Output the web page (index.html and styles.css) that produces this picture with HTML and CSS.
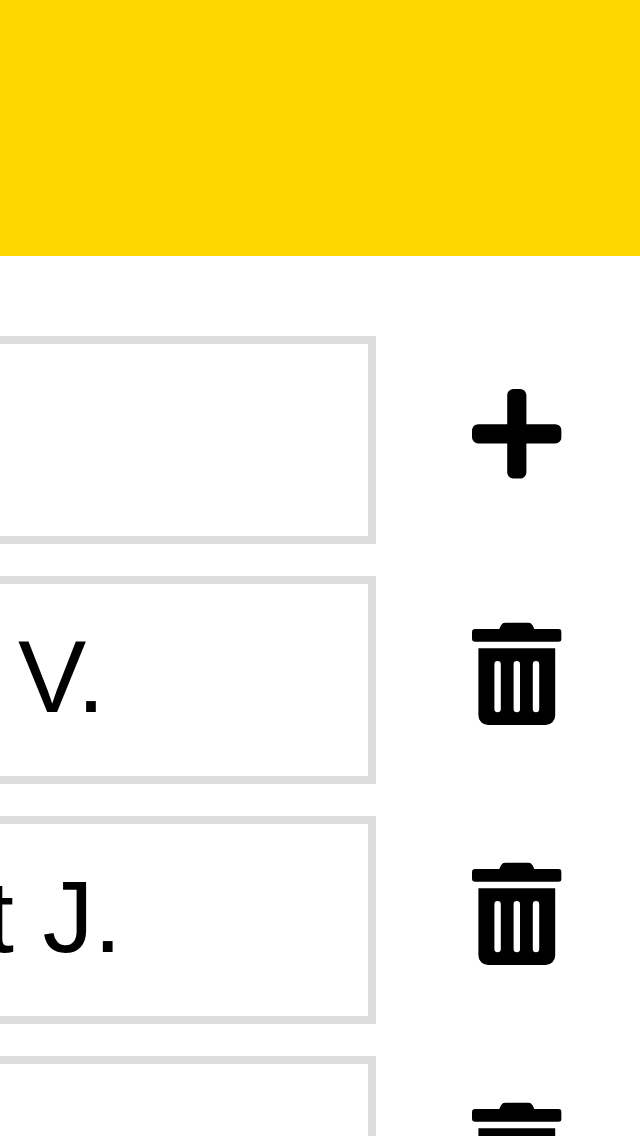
FILE: index.html
```html
<!DOCTYPE html>
<html lang="en">
<head>
<meta charset="utf-8">
<meta name="viewport" content="width=device-width">
<title>List</title>
<link rel="stylesheet" href="styles.css">
</head>
<body>
<svg class="symbols" aria-hidden="true">
<symbol id="plus" viewBox="0 0 448 512"><path d="M416 208H272V64c0-17.67-14.33-32-32-32h-32c-17.67 0-32 14.33-32 32v144H32c-17.67 0-32 14.33-32 32v32c0 17.67 14.33 32 32 32h144v144c0 17.67 14.33 32 32 32h32c17.67 0 32-14.33 32-32V304h144c17.67 0 32-14.33 32-32v-32c0-17.67-14.33-32-32-32z"/></symbol>
<symbol id="trash" viewBox="0 0 448 512"><path d="M32 464a48 48 0 0 0 48 48h288a48 48 0 0 0 48-48V128H32zm272-256a16 16 0 0 1 32 0v224a16 16 0 0 1-32 0zm-96 0a16 16 0 0 1 32 0v224a16 16 0 0 1-32 0zm-96 0a16 16 0 0 1 32 0v224a16 16 0 0 1-32 0zM432 32H312l-9.4-18.7A24 24 0 0 0 281.1 0H166.8a23.72 23.72 0 0 0-21.4 13.3L136 32H16A16 16 0 0 0 0 48v32a16 16 0 0 0 16 16h416a16 16 0 0 0 16-16V48a16 16 0 0 0-16-16z"/></symbol>
</svg>
<header class="banner"></header>
<main class="list">
<div class="row"><div class="field"></div><svg class="icon" viewBox="0 -3 450 515"><use href="#plus" width="448" height="512"/></svg></div>
<div class="row"><div class="field"><span class="name name-first">V.</span></div><svg class="icon" viewBox="0 -3 450 515"><use href="#trash" width="448" height="512"/></svg></div>
<div class="row"><div class="field"><span class="name name-second">t J.</span></div><svg class="icon" viewBox="0 -3 450 515"><use href="#trash" width="448" height="512"/></svg></div>
<div class="row row-last"><div class="field"></div><svg class="icon" viewBox="0 -3 450 515"><use href="#trash" width="448" height="512"/></svg></div>
</main>
</body>
</html>
```
FILE: styles.css
```css
html { overflow: hidden; }
body {
  margin: 0;
  height: 1136px;
  overflow: hidden;
  background: #fff;
  color: #000;
  font: 102.4px/118px "Liberation Sans", Arial, sans-serif;
}
.symbols { display: none; }
.banner {
  height: 256px;
  background: #ffd700;
}
.list {
  display: flex;
  flex-direction: column;
  gap: 32px;
  padding-top: 80px;
}
.row {
  display: flex;
  flex: none;
  height: 208px;
}
.row-last {
  height: 80px;
  overflow: hidden;
}
.field {
  box-sizing: border-box;
  width: 376px;
  height: 208px;
  padding-top: 34px;
  border: 8px solid #ddd;
  border-left: 0;
  overflow: hidden;
}
.name {
  display: block;
  white-space: nowrap;
}
.name-first { margin-left: 17.9px; }
.name-second { margin-left: -14.5px; }
.icon {
  width: 90px;
  height: 103px;
  margin: 46px 0 0 96px;
  overflow: visible;
}
```
